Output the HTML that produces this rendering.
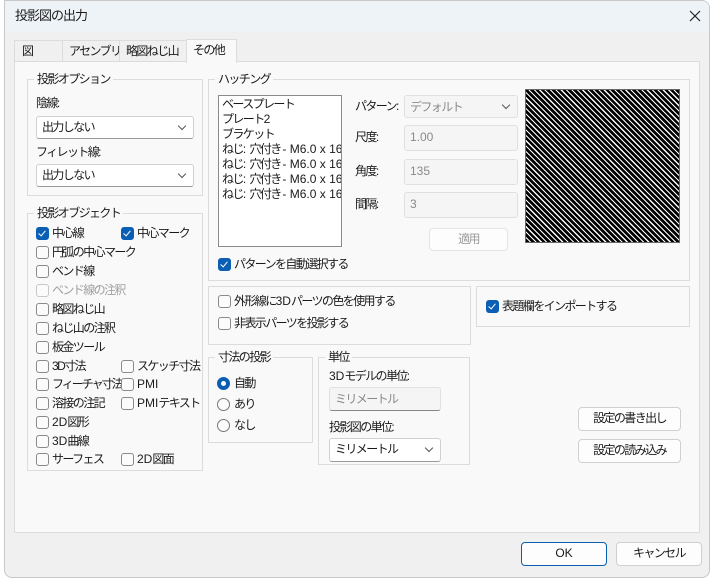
<!DOCTYPE html>
<html><head><meta charset="utf-8"><style>
*{box-sizing:border-box;margin:0;padding:0}
body{width:715px;height:581px;background:#fff;position:relative;overflow:hidden;font-family:"Liberation Sans","Noto Sans CJK JP",sans-serif;font-size:12px;color:#1a1a1a;letter-spacing:-1.6px}
.a{position:absolute}
.l{letter-spacing:0}
.win{left:4px;top:0;width:706px;height:578px;background:#f0f0f0;border:1px solid #c8c8c8;border-radius:0 8px 8px 8px;overflow:hidden}
.tb{left:0;top:0;width:706px;height:31px;background:#eef3f7}
.grp{position:absolute;border:1px solid #dcdcdc}
.gt{position:absolute;background:#f9f9f9;padding:0 3px;top:-9px;left:6px;line-height:16px}
.t{position:absolute;white-space:nowrap;line-height:16px}
.cb{position:absolute;width:13px;height:13px;border:1px solid #8a8a8a;border-radius:3px;background:#fbfbfb}
.cb.on{background:#0a5fb5;border-color:#0a5fb5}
.cb.on::after{content:"";position:absolute;left:3px;top:1px;width:3px;height:6px;border:solid #fff;border-width:0 1.5px 1.5px 0;transform:rotate(40deg)}
.cb.dis{border-color:#c8c8c8}
.rb{position:absolute;width:13px;height:13px;border:1px solid #777;border-radius:50%;background:#fbfbfb}
.rb.on{border:4px solid #0a5fb5;background:#fff}
.combo{position:absolute;background:#fff;border:1px solid #d0d0d0;border-bottom-color:#9a9a9a;border-radius:3px;padding-left:5px;line-height:21px}
.combo::after{content:"";position:absolute;right:8px;top:6px;width:5px;height:5px;border:solid #555;border-width:0 1px 1px 0;transform:rotate(45deg)}
.inp{position:absolute;background:#f5f5f5;border:1px solid #e0e0e0;border-radius:3px;padding-left:5px;line-height:22px;color:#8a8a8a}
.btn{position:absolute;background:#fdfdfd;border:1px solid #d0d0d0;border-radius:4px;text-align:center;line-height:21px}
</style></head><body>
<div class="a win">
<div class="a tb"></div>
<div class="t" style="left:10px;top:7px;font-size:13px;letter-spacing:-1px">投影図の出力</div>
<svg class="a" style="left:684px;top:9px" width="12" height="12"><path d="M1 1L11 11M11 1L1 11" stroke="#222" stroke-width="1.2"/></svg>
</div>
<div class="a" style="left:14px;top:40px;width:49px;height:22px;border:1px solid #dcdcdc;background:#f0f0f0"></div>
<div class="t" style="left:22px;top:43px">図</div>
<div class="a" style="left:62px;top:40px;width:58px;height:22px;border:1px solid #dcdcdc;background:#f0f0f0"></div>
<div class="t" style="left:69px;top:43px">アセンブリ</div>
<div class="a" style="left:119px;top:40px;width:68px;height:22px;border:1px solid #dcdcdc;background:#f0f0f0"></div>
<div class="t" style="left:126px;top:43px">略図ねじ山</div>
<div class="a" style="left:14px;top:61px;width:686px;height:472px;border:1px solid #dcdcdc;background:#f9f9f9"></div>
<div class="a" style="left:186px;top:39px;width:51px;height:24px;border:1px solid #dcdcdc;border-bottom:none;background:#f9f9f9"></div>
<div class="t" style="left:193px;top:42px">その他</div>

<div class="grp" style="left:27px;top:79px;width:176px;height:117px"><div class="gt">投影オプション</div></div>
<div class="t" style="left:36px;top:95px">陰線<span class="l">:</span></div>
<div class="combo" style="left:36px;top:116px;width:158px;height:23px">出力しない</div>
<div class="t" style="left:36px;top:144px">フィレット線<span class="l">:</span></div>
<div class="combo" style="left:36px;top:164px;width:158px;height:23px">出力しない</div>

<div class="grp" style="left:27px;top:213px;width:176px;height:258px"><div class="gt">投影オブジェクト</div></div>
<div class="cb on" style="left:36px;top:227px"></div><div class="t" style="left:52px;top:225px">中心線</div>
<div class="cb on" style="left:121px;top:227px"></div><div class="t" style="left:137px;top:225px">中心マーク</div>
<div class="cb" style="left:36px;top:246px"></div><div class="t" style="left:52px;top:244px">円弧の中心マーク</div>
<div class="cb" style="left:36px;top:265px"></div><div class="t" style="left:52px;top:263px">ベンド線</div>
<div class="cb dis" style="left:36px;top:284px"></div><div class="t" style="left:52px;top:282px;color:#a0a0a0">ベンド線の注釈</div>
<div class="cb" style="left:36px;top:303px"></div><div class="t" style="left:52px;top:301px">略図ねじ山</div>
<div class="cb" style="left:36px;top:322px"></div><div class="t" style="left:52px;top:320px">ねじ山の注釈</div>
<div class="cb" style="left:36px;top:341px"></div><div class="t" style="left:52px;top:339px">板金ツール</div>
<div class="cb" style="left:36px;top:360px"></div><div class="t" style="left:52px;top:358px">3D寸法</div>
<div class="cb" style="left:121px;top:360px"></div><div class="t" style="left:137px;top:358px">スケッチ寸法</div>
<div class="cb" style="left:36px;top:378px"></div><div class="t" style="left:52px;top:376px;letter-spacing:-2px">フィーチャ寸法</div>
<div class="cb" style="left:121px;top:378px"></div><div class="t l" style="left:137px;top:376px">PMI</div>
<div class="cb" style="left:36px;top:397px"></div><div class="t" style="left:52px;top:395px">溶接の注記</div>
<div class="cb" style="left:121px;top:397px"></div><div class="t" style="left:137px;top:395px"><span class="l">PMI</span>テキスト</div>
<div class="cb" style="left:36px;top:416px"></div><div class="t" style="left:52px;top:414px"><span class="l">2D</span>図形</div>
<div class="cb" style="left:36px;top:435px"></div><div class="t" style="left:52px;top:433px"><span class="l">3D</span>曲線</div>
<div class="cb" style="left:36px;top:453px"></div><div class="t" style="left:52px;top:451px">サーフェス</div>
<div class="cb" style="left:121px;top:453px"></div><div class="t" style="left:137px;top:451px"><span class="l">2D</span>図面</div>

<div class="grp" style="left:208px;top:79px;width:482px;height:202px"><div class="gt">ハッチング</div></div>
<div class="a" style="left:218px;top:95px;width:124px;height:152px;background:#fff;border:1px solid #8a8a8a;overflow:hidden">
<div class="t" style="left:3px;top:1px;line-height:15px">ベースプレート<br>プレート<span class="l">2</span><br>ブラケット<br>ねじ<span class="l">: </span>穴付き <span class="l">- M6.0 x 16</span><br>ねじ<span class="l">: </span>穴付き <span class="l">- M6.0 x 16</span><br>ねじ<span class="l">: </span>穴付き <span class="l">- M6.0 x 16</span><br>ねじ<span class="l">: </span>穴付き <span class="l">- M6.0 x 16</span></div></div>
<div class="t" style="left:355px;top:98px">パターン<span class="l">:</span></div>
<div class="t" style="left:355px;top:129px">尺度<span class="l">:</span></div>
<div class="t" style="left:355px;top:163px">角度<span class="l">:</span></div>
<div class="t" style="left:355px;top:196px">間隔<span class="l">:</span></div>
<div class="inp combo" style="left:404px;top:95px;width:114px;height:23px;background:#f5f5f5;border-color:#e0e0e0;color:#8a8a8a">デフォルト</div>
<div class="inp l" style="left:404px;top:125px;width:114px;height:26px">1.00</div>
<div class="inp l" style="left:404px;top:159px;width:114px;height:26px">135</div>
<div class="inp l" style="left:404px;top:192px;width:114px;height:26px">3</div>
<div class="btn" style="left:429px;top:228px;width:79px;height:23px;color:#9a9a9a;border-color:#e4e4e4">適用</div>
<div class="a" style="left:525px;top:89px;width:155px;height:154px;border:1px solid #666;background:repeating-linear-gradient(45deg,#000 0,#000 2.6px,#fff 2.6px,#fff 3.8px)"></div>
<div class="cb on" style="left:218px;top:258px"></div><div class="t" style="left:234px;top:256px">パターンを自動選択する</div>

<div class="grp" style="left:208px;top:286px;width:263px;height:59px"></div>
<div class="cb" style="left:218px;top:295px"></div><div class="t" style="left:234px;top:293px">外形線に<span class="l">3D</span>パーツの色を使用する</div>
<div class="cb" style="left:218px;top:317px"></div><div class="t" style="left:234px;top:315px">非表示パーツを投影する</div>
<div class="grp" style="left:476px;top:286px;width:214px;height:41px"></div>
<div class="cb on" style="left:486px;top:300px"></div><div class="t" style="left:502px;top:298px">表題欄をインポートする</div>

<div class="grp" style="left:208px;top:357px;width:105px;height:86px"><div class="gt">寸法の投影</div></div>
<div class="rb on" style="left:217px;top:377px"></div><div class="t" style="left:234px;top:375px">自動</div>
<div class="rb" style="left:217px;top:398px"></div><div class="t" style="left:234px;top:396px">あり</div>
<div class="rb" style="left:217px;top:419px"></div><div class="t" style="left:234px;top:417px">なし</div>

<div class="grp" style="left:318px;top:357px;width:152px;height:108px"><div class="gt">単位</div></div>
<div class="t" style="left:329px;top:368px"><span class="l">3D</span>モデルの単位<span class="l">:</span></div>
<div class="inp" style="left:329px;top:387px;width:112px;height:24px;border-bottom-color:#888">ミリメートル</div>
<div class="t" style="left:329px;top:419px">投影図の単位<span class="l">:</span></div>
<div class="combo" style="left:329px;top:438px;width:112px;height:24px">ミリメートル</div>

<div class="btn" style="left:578px;top:407px;width:103px;height:24px">設定の書き出し</div>
<div class="btn" style="left:578px;top:439px;width:103px;height:24px">設定の読み込み</div>
<div class="btn l" style="left:521px;top:542px;width:86px;height:24px;border-color:#0a5fb5">OK</div>
<div class="btn" style="left:616px;top:542px;width:86px;height:24px">キャンセル</div>
</body></html>
